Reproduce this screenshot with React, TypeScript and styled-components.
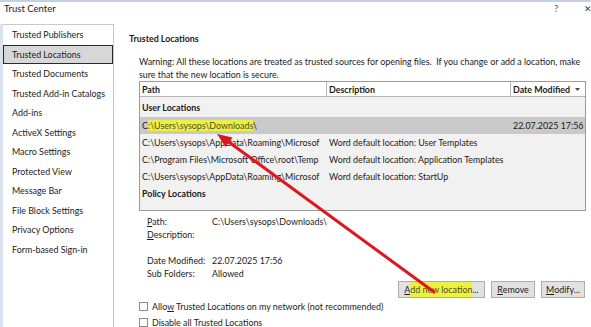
import React from "react";
import styled, { createGlobalStyle, css } from "styled-components";

const GlobalStyle = createGlobalStyle`
  html, body {
    margin: 0;
    padding: 0;
    background: #fff;
  }
  body {
    width: 591px;
    height: 327px;
    overflow: hidden;
  }
`;

const FONT = `"Lato", "Liberation Sans", Arial, sans-serif`;

const sections = [
  "Trusted Publishers",
  "Trusted Locations",
  "Trusted Documents",
  "Trusted Add-in Catalogs",
  "Add-ins",
  "ActiveX Settings",
  "Macro Settings",
  "Protected View",
  "Message Bar",
  "File Block Settings",
  "Privacy Options",
  "Form-based Sign-in",
];

type Location = {
  path: string;
  description: string;
  date?: string;
  selected?: boolean;
};

const userLocations: Location[] = [
  {
    path: "C:\\Users\\sysops\\Downloads\\",
    description: "",
    date: "22.07.2025 17:56",
    selected: true,
  },
  {
    path: "C:\\Users\\sysops\\AppData\\Roaming\\Microsof",
    description: "Word default location: User Templates",
  },
  {
    path: "C:\\Program Files\\Microsoft Office\\root\\Temp",
    description: "Word default location: Application Templates",
  },
  {
    path: "C:\\Users\\sysops\\AppData\\Roaming\\Microsof",
    description: "Word default location: StartUp",
  },
];

const App: React.FC = () => {
  return (
    <>
      <GlobalStyle />
      <Window>
        <TitleBar>
          <Title>Trust Center</Title>
          <HelpButton>?</HelpButton>
          <CloseButton>✕</CloseButton>
        </TitleBar>
        <Body>
          <Sidebar>
            {sections.map((s) => (
              <SideItem key={s} active={s === "Trusted Locations"}>
                {s}
              </SideItem>
            ))}
          </Sidebar>
          <Main>
            <Heading>Trusted Locations</Heading>
            <Separator />
            <Content>
              <Warning>
                Warning: All these locations are treated as trusted sources for
                opening files.&nbsp; If you change or add a location, make
                <br />
                sure that the new location is secure.
              </Warning>
              <Table>
                <HeaderRow>
                  <HeaderCell width={187}>Path</HeaderCell>
                  <HeaderCell width={184}>Description</HeaderCell>
                  <HeaderCell width={74} last>
                    Date Modified
                    <SortArrow viewBox="0 0 5 3">
                      <polygon points="0,0 5,0 2.5,3" fill="#444" />
                    </SortArrow>
                  </HeaderCell>
                </HeaderRow>
                <TableBody>
                  <GroupRow tall>User Locations</GroupRow>
                  {userLocations.map((loc, i) => (
                    <Row key={i} selected={loc.selected}>
                      <Cell width={187}>
                        {loc.selected ? (
                          <>
                            C<Highlight>:\Users\sysops\Downloads</Highlight>\
                          </>
                        ) : (
                          loc.path
                        )}
                      </Cell>
                      <Cell width={184}>{loc.description}</Cell>
                      <Cell width={74}>{loc.date}</Cell>
                    </Row>
                  ))}
                  <GroupRow>Policy Locations</GroupRow>
                </TableBody>
              </Table>
              <Details>
                <Label>
                  <u>P</u>ath:
                </Label>
                <Value>C:\Users\sysops\Downloads\</Value>
                <Label>
                  <u>D</u>escription:
                </Label>
                <Value />
                <Spacer />
                <Label>Date Modified:</Label>
                <Value>22.07.2025 17:56</Value>
                <Label>Sub Folders:</Label>
                <Value>Allowed</Value>
              </Details>
              <ButtonRow>
                <Button width={87}>
                  <u>A</u>
                  <Highlight>dd new location</Highlight>...
                </Button>
                <Button width={44}>
                  <u>R</u>emove
                </Button>
                <Button width={44}>
                  <u>M</u>odify...
                </Button>
              </ButtonRow>
              <CheckRow>
                <CheckBox />
                <span>
                  Allo<u>w</u> Trusted Locations on my network (not recommended)
                </span>
              </CheckRow>
              <CheckRow>
                <CheckBox />
                <span>
                  <u>D</u>isable all Trusted Locations
                </span>
              </CheckRow>
            </Content>
          </Main>
        </Body>
        <Arrow viewBox="0 0 591 327">
          <line
            x1="434"
            y1="290"
            x2="226"
            y2="138"
            stroke="#e3151c"
            strokeWidth="3"
            strokeLinecap="round"
          />
          <polygon points="217,132 232.5,135.5 225.5,145" fill="#e3151c" />
        </Arrow>
      </Window>
    </>
  );
};

export default App;

const Window = styled.div`
  position: relative;
  display: flex;
  flex-direction: column;
  width: 591px;
  height: 327px;
  overflow: hidden;
  box-sizing: border-box;
  border-top: 2px solid #c5cfe3;
  background: #fff;
  font-family: ${FONT};
  font-size: 8.9px;
  color: #1b1b1b;
`;

const TitleBar = styled.div`
  display: flex;
  align-items: flex-start;
  height: 22px;
  padding: 1px 0 0 4px;
  box-sizing: border-box;
  font-size: 9.5px;
`;

const Title = styled.span`
  flex: 1;
`;

const HelpButton = styled.span`
  width: 30px;
  color: #555;
`;

const CloseButton = styled.span`
  width: 9px;
  margin-right: -2px;
  color: #444;
  font-size: 9px;
`;

const Body = styled.div`
  flex: 1;
  display: flex;
  border-left: 3px solid #dbe2ef;
  min-height: 0;
`;

const Sidebar = styled.div`
  width: 110px;
  flex-shrink: 0;
  border-top: 1px solid #c9c9c9;
  border-right: 1px solid #c9c9c9;
`;

const SideItem = styled.div<{ active?: boolean }>`
  display: flex;
  align-items: center;
  height: 19.5px;
  box-sizing: border-box;
  padding-left: 9px;
  white-space: nowrap;

  ${(p) =>
    p.active &&
    css`
      background: #d7d7d7;
      border: 1px solid #2a2a2a;
      padding-left: 8px;
    `}
`;

const Main = styled.div`
  flex: 1;
  display: flex;
  flex-direction: column;
  padding: 0 5px 0 15px;
`;

const Heading = styled.div`
  margin-top: 9px;
  line-height: 12px;
  font-weight: 700;
`;

const Separator = styled.div`
  height: 1px;
  margin-top: 5px;
  background: #e4e4e4;
`;

const Content = styled.div`
  display: flex;
  flex-direction: column;
  margin-left: 10px;
`;

const Warning = styled.div`
  margin-top: 5px;
  line-height: 13px;
  white-space: nowrap;
`;

const Table = styled.div`
  display: flex;
  flex-direction: column;
  width: 447px;
  height: 130px;
  box-sizing: border-box;
  border: 1px solid #9a9a9a;
  background: #f1f1f1;
`;

const HeaderRow = styled.div`
  display: flex;
  height: 14px;
  background: #fff;
  border-bottom: 1px solid #b5b5b5;
  font-weight: 700;
`;

const HeaderCell = styled.div<{ width: number; last?: boolean }>`
  display: flex;
  align-items: center;
  width: ${(p) => p.width}px;
  box-sizing: border-box;
  padding-left: 2px;
  border-right: ${(p) => (p.last ? "none" : "1px solid #b5b5b5")};
  ${(p) => p.last && "flex: 1;"}
`;

const SortArrow = styled.svg`
  width: 5px;
  height: 3px;
  margin-left: 5px;
`;

const TableBody = styled.div`
  flex: 1;
  display: flex;
  flex-direction: column;
`;

const GroupRow = styled.div<{ tall?: boolean }>`
  display: flex;
  align-items: center;
  height: ${(p) => (p.tall ? 20 : 17)}px;
  padding-left: 2px;
  font-weight: 700;
`;

const Row = styled.div<{ selected?: boolean }>`
  display: flex;
  align-items: center;
  height: 17px;
  background: ${(p) => (p.selected ? "#c9c9c9" : "transparent")};
`;

const Cell = styled.div<{ width: number }>`
  width: ${(p) => p.width}px;
  box-sizing: border-box;
  padding-left: 2px;
  padding-right: 4px;
  white-space: nowrap;
  overflow: hidden;
`;

const Highlight = styled.span`
  background: #eef03f;
  color: #4e4e2a;
  padding: 2px 0;
`;

const Details = styled.div`
  display: grid;
  grid-template-columns: 65px 1fr;
  grid-auto-rows: 13px;
  align-items: center;
  margin: 4px 0 0 8px;
`;

const Label = styled.span``;

const Value = styled.span``;

const Spacer = styled.div`
  grid-column: 1 / -1;
  height: 11px;
`;

const ButtonRow = styled.div`
  display: flex;
  justify-content: flex-end;
  gap: 6px;
  margin: 1px 1px 0 0;
  height: 17px;
`;

const Button = styled.div<{ width: number }>`
  display: flex;
  align-items: center;
  justify-content: center;
  width: ${(p) => p.width}px;
  box-sizing: border-box;
  border: 1px solid #adadad;
  background: #e1e1e1;
  white-space: nowrap;
`;

const CheckRow = styled.div`
  display: flex;
  align-items: center;
  gap: 4px;
  height: 16px;
  &:first-of-type {
    margin-top: 1px;
  }
`;

const CheckBox = styled.span`
  width: 9px;
  height: 9px;
  box-sizing: border-box;
  border: 1px solid #8a8a8a;
  background: #fff;
`;

const Arrow = styled.svg`
  position: absolute;
  top: 0;
  left: 0;
  width: 591px;
  height: 327px;
  pointer-events: none;
`;
